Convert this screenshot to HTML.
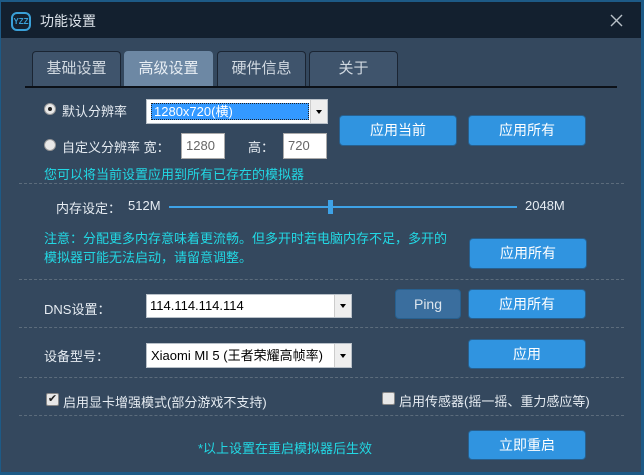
<!DOCTYPE html>
<html><head><meta charset="utf-8"><style>
*{margin:0;padding:0;box-sizing:border-box}
body{width:644px;height:475px;background:#1d5a86;position:relative;overflow:hidden;font-family:"Liberation Sans","Noto Sans CJK SC",sans-serif;font-size:13px;color:#e6ecf2}
.win{position:absolute;left:1px;top:2px;width:640px;height:470px;background:#34485e}
.title{position:absolute;left:0;top:0;width:640px;height:36px;background:#13202f}
.a{position:absolute;white-space:nowrap}
.tab{position:absolute;top:49px;height:35px;width:89px;border:1px solid #1b2533;border-bottom:none;border-radius:4px 4px 0 0;background:#3f546c;color:#d0d8e0;font-size:15px;text-align:center;line-height:34px}
.tab.on{background:#6d88a4;color:#e8eef4;border-color:#6d88a4}
.btn{position:absolute;width:118px;background:#3094e0;border:1px solid #27608f;border-radius:4px;color:#fff;text-align:center;font-size:14px}
.dash{position:absolute;left:18px;width:605px;height:0;border-top:1px dashed #5c6c7c}
.cy{color:#22d8e4}
.sel{position:absolute;background:#fff;border:1px solid #b8c0c8;color:#000}
.arr{position:absolute;right:0;top:0;bottom:0;width:17px;background:#eee;border-left:1px solid #ccc}
.arr:after{content:"";position:absolute;left:5px;top:50%;margin-top:-2px;border:3px solid transparent;border-top:4px solid #000;border-bottom:none}
.inp{position:absolute;background:#fff;border:1px solid #aaa;color:#666;font-size:13px;padding-left:4px}
.radio{position:absolute;width:12px;height:12px;border-radius:50%;background:#e8e8e8;border:1px solid #999}
.cb{position:absolute;width:13px;height:13px;border-radius:2px;background:#e8e8e8;border:1px solid #888;font-size:11px;color:#222;line-height:11px;text-align:center}
</style></head><body>
<div class="win">
<div class="title">
 <div class="a" style="left:10px;top:10px;width:20px;height:19px;border:2px solid #3aa0d8;border-radius:6px;color:#3aa0d8;font-size:8px;font-weight:bold;line-height:15px;text-align:center">YZZ</div>
 <div class="a" style="left:39px;top:9px;font-size:14px;color:#dde3ea">功能设置</div>
 <svg class="a" style="left:609px;top:12px" width="13" height="13"><path d="M1 1L12 12M12 1L1 12" stroke="#b8c0c8" stroke-width="1.4"/></svg>
</div>
<div class="tab" style="left:31px">基础设置</div>
<div class="tab on" style="left:123px">高级设置</div>
<div class="tab" style="left:216px">硬件信息</div>
<div class="tab" style="left:308px">关于</div>
<div class="a" style="left:24px;top:84px;width:592px;height:2px;background:#0c1118"></div>

<div class="radio" style="left:43px;top:101px"><div style="position:absolute;left:3px;top:3px;width:4px;height:4px;border-radius:50%;background:#222"></div></div>
<div class="a" style="left:61px;top:99px">默认分辨率</div>
<div class="sel" style="left:145px;top:97px;width:182px;height:25px"><div style="position:absolute;left:4px;top:3px;width:158px;height:17px;background:#3399ff;color:#fff;border:1px dotted #222;padding-left:2px;line-height:15px">1280x720(横)</div><div class="arr"></div></div>
<div class="radio" style="left:43px;top:137px"></div>
<div class="a" style="left:61px;top:135px">自定义分辨率&nbsp;宽：</div>
<div class="inp" style="left:180px;top:131px;width:44px;height:26px;line-height:24px">1280</div>
<div class="a" style="left:247px;top:135px">高：</div>
<div class="inp" style="left:282px;top:131px;width:44px;height:26px;line-height:24px">720</div>
<div class="btn" style="left:338px;top:113px;height:31px;line-height:29px">应用当前</div>
<div class="btn" style="left:467px;top:113px;height:31px;line-height:29px">应用所有</div>
<div class="a cy" style="left:43px;top:162px">您可以将当前设置应用到所有已存在的模拟器</div>
<div class="dash" style="top:181px"></div>

<div class="a" style="left:55px;top:196px">内存设定：</div>
<div class="a" style="left:127px;top:196px">512M</div>
<div class="a" style="left:168px;top:204px;width:348px;height:2px;background:#3ea2e6"></div>
<div class="a" style="left:327px;top:198px;width:5px;height:14px;background:#3ea2e6"></div>
<div class="a" style="left:524px;top:196px">2048M</div>
<div class="a cy" style="left:43px;top:227px;line-height:19px">注意：分配更多内存意味着更流畅。但多开时若电脑内存不足，多开的<br>模拟器可能无法启动，请留意调整。</div>
<div class="btn" style="left:468px;top:236px;height:31px;line-height:29px">应用所有</div>
<div class="dash" style="top:277px"></div>

<div class="a" style="left:43px;top:297px">DNS设置：</div>
<div class="sel" style="left:145px;top:292px;width:206px;height:24px"><div style="position:absolute;left:3px;top:3px;line-height:16px">114.114.114.114</div><div class="arr"></div></div>
<div class="btn" style="left:394px;top:287px;width:66px;height:30px;line-height:28px;background:#3a6e9e;color:#dde6ee">Ping</div>
<div class="btn" style="left:467px;top:287px;height:30px;line-height:28px">应用所有</div>
<div class="dash" style="top:325px"></div>

<div class="a" style="left:43px;top:344px">设备型号：</div>
<div class="sel" style="left:145px;top:341px;width:206px;height:25px"><div style="position:absolute;left:4px;top:4px;line-height:16px">Xiaomi MI 5 (王者荣耀高帧率)</div><div class="arr"></div></div>
<div class="btn" style="left:467px;top:337px;height:30px;line-height:28px">应用</div>
<div class="dash" style="top:375px"></div>

<div class="cb" style="left:45px;top:391px">✔</div>
<div class="a" style="left:62px;top:390px">启用显卡增强模式(部分游戏不支持)</div>
<div class="cb" style="left:381px;top:390px"></div>
<div class="a" style="left:398px;top:389px">启用传感器(摇一摇、重力感应等)</div>
<div class="dash" style="top:413px"></div>

<div class="a cy" style="left:197px;top:436px">*以上设置在重启模拟器后生效</div>
<div class="btn" style="left:467px;top:428px;height:30px;line-height:28px">立即重启</div>
</div>
</body></html>
